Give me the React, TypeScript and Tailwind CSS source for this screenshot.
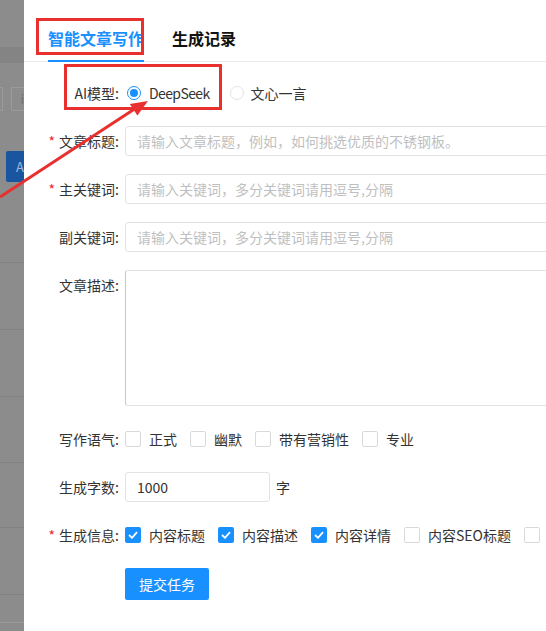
import React from "react";

const font = { fontFamily: '"Noto Sans CJK SC", "Noto Sans", sans-serif' };

function Label({ text, required }: { text: string; required?: boolean }) {
  return (
    <div className="w-[101px] shrink-0 flex items-center justify-end pr-[6px] text-[14px] text-[#333] leading-[30px]">
      {required && <span className="text-[#f5222d] mr-[4px] text-[14px]">*</span>}
      <span>{text}:</span>
    </div>
  );
}

function Checkbox({ label, checked }: { label?: string; checked?: boolean }) {
  return (
    <div className="flex items-center mr-[13px] shrink-0">
      {checked ? (
        <span className="w-[16px] h-[16px] rounded-[2px] bg-[#1890ff] flex items-center justify-center">
          <svg width="10" height="8" viewBox="0 0 10 8">
            <path d="M1 4 L4 6.8 L9 1.2" fill="none" stroke="white" strokeWidth="1.8" />
          </svg>
        </span>
      ) : (
        <span className="w-[16px] h-[16px] rounded-[2px] border border-[#d9d9d9] bg-white" />
      )}
      {label && <span className="ml-[8px] text-[14px] text-[#333] whitespace-nowrap">{label}</span>}
    </div>
  );
}

function TextInput({ placeholder }: { placeholder: string }) {
  return (
    <div className="w-[440px] h-[30px] border border-[#e3e3e3] rounded-[3px] flex items-center pl-[11px] text-[14px] text-[#bfbfbf] whitespace-nowrap shrink-0">
      {placeholder}
    </div>
  );
}

export default function App() {
  return (
    <div className="relative w-[546px] h-[631px] overflow-hidden flex bg-white leading-[22px]" style={font}>
      {/* dimmed background page */}
      <div className="w-[24px] shrink-0 bg-[#8c8c8c] flex flex-col">
        <div className="h-[47px]" />
        <div className="h-[16px] bg-[#848484]" />
        <div className="h-[24px]" />
        <div className="h-[24px] flex gap-[8px]">
          <div className="w-[3px] border-y border-r border-[#9a9a9a]" />
          <div className="flex-1 border-y border-l border-[#9a9a9a] text-[13px] text-[#6f6f6f] leading-[22px] text-right overflow-hidden">i</div>
        </div>
        <div className="h-[40px]" />
        <div className="h-[31px] ml-[6px] bg-[#1a56a0] rounded-l-[2px] text-[#9fb6d6] text-[13px] leading-[31px] text-right overflow-hidden">A</div>
        <div className="h-[81px] border-b border-[#828282]" />
        <div className="h-[67px] border-b border-[#828282]" />
        <div className="h-[67px] border-b border-[#828282]" />
        <div className="h-[66px] border-b border-[#828282]" />
        <div className="h-[65px] border-b border-[#828282]" />
        <div className="h-[67px] border-b border-[#828282]" />
        <div className="h-[28px] border-b border-[#9a9a9a]" />
      </div>

      {/* drawer panel */}
      <div className="flex-1 flex flex-col bg-white">
        <div className="h-[62px] border-b border-[#e8e8e8] flex items-end pl-[24px] gap-[28px] shrink-0">
          <div className="relative pb-[11px] text-[16px] leading-[24px] font-semibold text-[#1890ff] whitespace-nowrap">
            智能文章写作
            <div className="absolute left-0 right-0 bottom-[-1px] h-[2px] bg-[#1890ff]" />
          </div>
          <div className="pb-[11px] text-[16px] leading-[24px] font-semibold text-[#111] whitespace-nowrap">生成记录</div>
        </div>

        <div className="flex flex-col gap-[18px] mt-[16px]">
          <div className="flex items-center h-[30px]">
            <Label text="AI模型" />
            <div className="flex items-center">
              <span className="ml-[2px] w-[14px] h-[14px] rounded-full border border-[#1890ff] flex items-center justify-center">
                <span className="w-[8px] h-[8px] rounded-full bg-[#1890ff]" />
              </span>
              <span className="ml-[8px] text-[14px] text-[#333] tracking-[-0.6px]">DeepSeek</span>
              <span className="ml-[20px] w-[14px] h-[14px] rounded-full border border-[#e3e3e3]" />
              <span className="ml-[7px] text-[14px] text-[#333]">文心一言</span>
            </div>
          </div>

          <div className="flex items-center">
            <Label text="文章标题" required />
            <TextInput placeholder="请输入文章标题，例如，如何挑选优质的不锈钢板。" />
          </div>
          <div className="flex items-center">
            <Label text="主关键词" required />
            <TextInput placeholder="请输入关键词，多分关键词请用逗号,分隔" />
          </div>
          <div className="flex items-center">
            <Label text="副关键词" />
            <TextInput placeholder="请输入关键词，多分关键词请用逗号,分隔" />
          </div>
          <div className="flex items-start">
            <Label text="文章描述" />
            <div className="w-[440px] h-[136px] border border-[#e3e3e3] border-l-[#c8c8c8] rounded-[3px] shrink-0" />
          </div>

          <div className="flex items-center h-[30px]">
            <Label text="写作语气" />
            <Checkbox label="正式" />
            <Checkbox label="幽默" />
            <Checkbox label="带有营销性" />
            <Checkbox label="专业" />
          </div>

          <div className="flex items-center h-[30px]">
            <Label text="生成字数" />
            <div className="w-[145px] h-[30px] border border-[#e3e3e3] rounded-[3px] flex items-center pl-[11px] text-[14px] text-[#333]">1000</div>
            <span className="ml-[6px] text-[14px] text-[#333]">字</span>
          </div>

          <div className="flex items-center h-[30px]">
            <Label text="生成信息" required />
            <Checkbox label="内容标题" checked />
            <Checkbox label="内容描述" checked />
            <Checkbox label="内容详情" checked />
            <Checkbox label="内容SEO标题" />
            <Checkbox />
          </div>

          <div className="flex items-center">
            <div className="w-[101px] shrink-0" />
            <button className="h-[32px] px-[14px] bg-[#1890ff] text-white text-[14px] rounded-[2px]">提交任务</button>
          </div>
        </div>
      </div>

      {/* annotations */}
      <div className="absolute left-[36px] top-[18px] w-[108px] h-[37px] border-[3px] border-[#e8302e] pointer-events-none" />
      <div className="absolute left-[64px] top-[64px] w-[158px] h-[46px] border-[3px] border-[#e8302e] pointer-events-none" />
      <svg className="absolute left-0 top-0 pointer-events-none" width="546" height="631">
        <line x1="0" y1="197" x2="136" y2="108" stroke="#e8302e" strokeWidth="3" />
        <polygon points="148,101 129.8,103.9 137.4,115.6" fill="#e8302e" />
      </svg>
    </div>
  );
}
